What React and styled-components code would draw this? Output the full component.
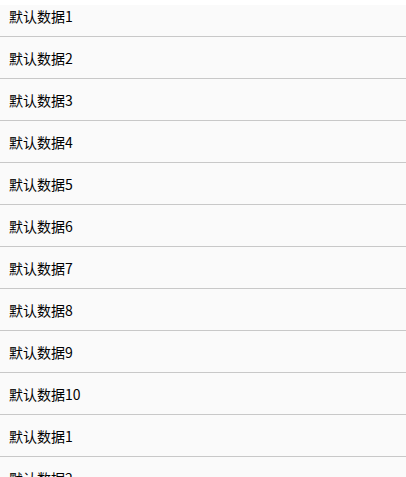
import React, {useLayoutEffect, useRef} from 'react'
import styled, {createGlobalStyle} from 'styled-components'

const GlobalStyle = createGlobalStyle`
  html, body {
    margin: 0;
    padding: 0;
    background: #ffffff;
  }
  body {
    font-family: "Noto Sans CJK SC", "Noto Sans", sans-serif;
  }
`

const Page = styled.div`
  display: flex;
  flex-direction: column;
  height: 477px;
  padding-top: 5px;
  box-sizing: border-box;
  background: #ffffff;
`

const Scroller = styled.div`
  flex: 1;
  overflow: hidden;
`

const List = styled.ul`
  list-style: none;
  margin: 0;
  padding: 0;
`

const Row = styled.li`
  display: flex;
  align-items: center;
  height: 41px;
  padding: 0 9px;
  background: #fafafa;
  border-bottom: 1px solid #c8c8c8;
  color: #000000;
  font-size: 14px;
  line-height: 1;
`

const items = [1, 2, 3, 4, 5, 6, 7, 8, 9, 10, 1, 2, 3]

export default function App() {
  const scroller = useRef(null)

  useLayoutEffect(() => {
    if (scroller.current) scroller.current.scrollTop = 10
  }, [])

  return (
    <>
      <GlobalStyle/>
      <Page>
        <Scroller ref={scroller}>
          <List>
            {items.map((n, i) => (
              <Row key={i}>默认数据{n}</Row>
            ))}
          </List>
        </Scroller>
      </Page>
    </>
  )
}
